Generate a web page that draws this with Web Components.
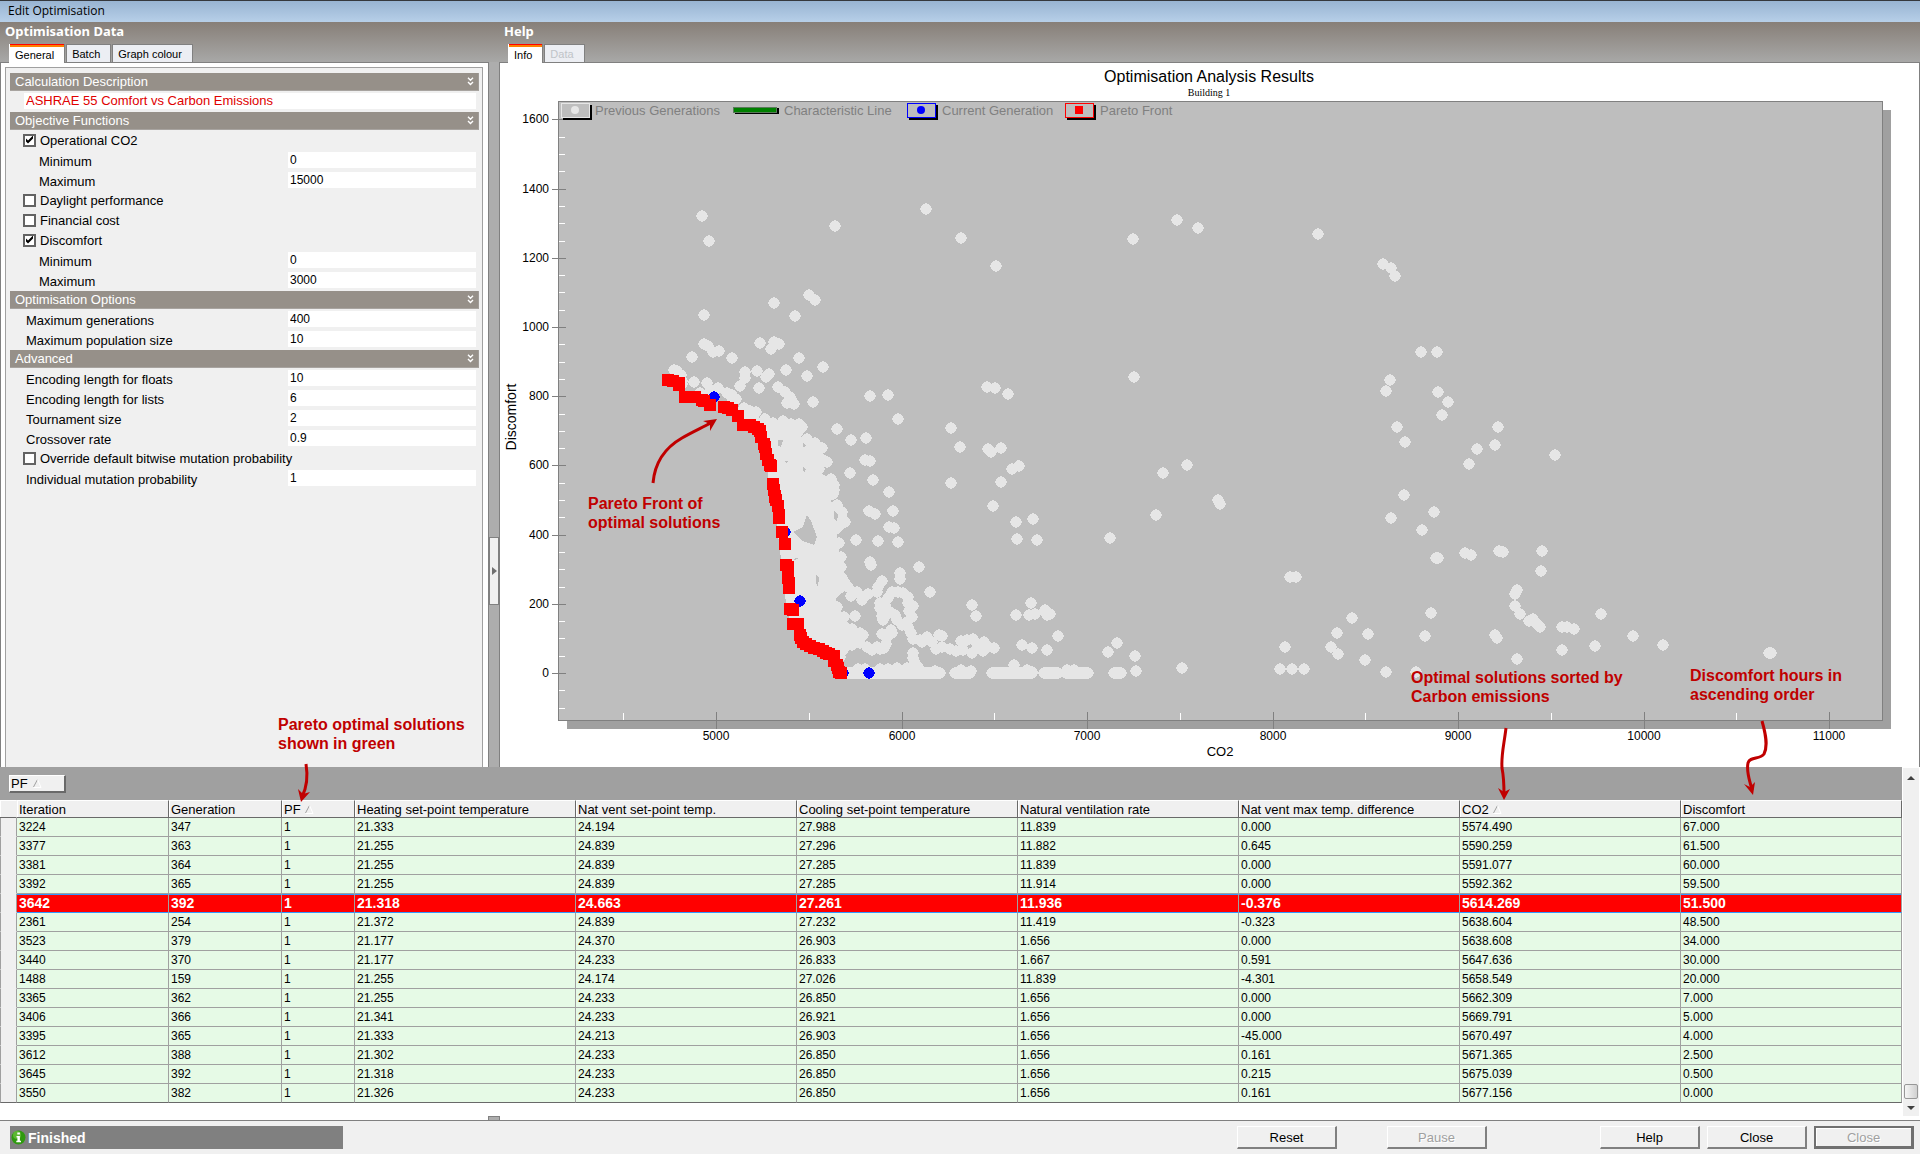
<!DOCTYPE html>
<html lang="en">
<head>
<meta charset="utf-8">
<title>Edit Optimisation</title>
<style>
html,body{margin:0;padding:0}
body{font-family:"Liberation Sans",Arial,sans-serif;font-size:13px;color:#000;background:#f0f0f0}
</style>
</head>
<body>
<optimisation-window></optimisation-window>

<script>
const define = (name, render, setup) => customElements.define(name, class extends HTMLElement {
  connectedCallback() {
    if (this.shadowRoot) return;
    this.attachShadow({ mode: "open" }).innerHTML = render(this);
    if (setup) setup(this, this.shadowRoot);
  }
});

define("title-bar", () => `
<style>
:host{display:flex;align-items:center;box-sizing:border-box;height:22px;padding:0 8px 2px;border-top:1px solid #35383d;
 background:linear-gradient(#98b4d2,#b7cfe8);font:12px "Open Sans","Noto Sans",sans-serif}
</style><slot></slot>`);

define("tab-strip", el => `
<style>
:host{display:block}
h2{margin:0;height:22px;padding:0 5px;font:bold 13px/18px "Noto Sans","Open Sans",sans-serif;color:#fff}
div{display:flex;gap:1px;padding-left:9px;height:18px}
button{margin:0;height:18px;padding:2px 10px 0 5px;border:1px solid #808080;border-bottom:0;background:#eceef3;
 font:11px/15px "Liberation Sans",sans-serif;color:#000;text-align:left;white-space:nowrap}
button.on{height:19px;padding-top:4px;border-top:0;border-left-color:#fff;
 background:linear-gradient(#f00 1px,#ff8000 1px,#ff8000 3px,#fff 3px);z-index:1}
button:disabled{color:#c0c4c8}
</style>
<h2>${el.getAttribute("heading")}</h2>
<div role="tablist">${el.getAttribute("tabs").split(",").map((t, i) =>
  `<button role="tab" class="${i ? "" : "on"}" ${t[0] === "-" ? "disabled" : ""}>${t.replace("-", "")}</button>`).join("")}</div>`);

define("option-section", el => `
<style>
:host{display:block}
h3{display:flex;align-items:center;justify-content:space-between;box-sizing:border-box;margin:1px 0 0;height:18px;padding:0 4px 0 5px;
 background:#969089;border-right:1px solid #a09c98;border-bottom:1px solid #a8a4a0;font:13px/16px "Liberation Sans",sans-serif;color:#fff}
</style>
<h3>${el.getAttribute("heading")}<svg width="7" height="9" viewBox="0 0 7 9" fill="none" stroke="#fff" stroke-width="1.4"><path d="M1 .8L3.5 3.3L6 .8M1 5L3.5 7.5L6 5"/></svg></h3>
<slot></slot>`);

define("option-field", el => `
<style>
:host{display:block;height:20px}
label{display:flex;height:20px;padding:0 3px 0 16px}
:host([sub]) label{padding-left:29px}
span{flex:1;padding-top:4px;line-height:15px;white-space:nowrap}
input{box-sizing:border-box;width:188px;height:16px;margin:2px 0 0;padding:0 2px;border:0;background:#fff;
 font:12px/16px "Liberation Sans",sans-serif;color:#000;border-radius:0}
:host([wide]) label{padding-left:14px}
:host([wide]) input{flex:1;font-size:13px;color:#e00000}
</style>
<label>${el.hasAttribute("wide") ? "" : `<span>${el.getAttribute("label")}</span>`}<input type="text" value="${el.getAttribute("value")}" ${el.hasAttribute("wide") ? 'aria-label="Description"' : ""}></label>`);

define("option-check", el => `
<style>
:host{display:block;height:20px}
label{display:flex;align-items:center;gap:4px;height:20px;padding-left:13px;white-space:nowrap}
input{appearance:none;box-sizing:border-box;width:13px;height:13px;margin:0;border:2px solid #636363;background:#fff}
input:checked::after{content:"";display:block;width:9px;height:9px;background:#000;
 clip-path:polygon(1px 3px,3px 5px,8px 0,8px 3px,3px 8px,1px 6px)}
</style>
<label><input type="checkbox" ${el.hasAttribute("checked") ? "checked" : ""}>${el.getAttribute("label")}</label>`);

define("options-pane", () => `
<style>
:host{display:flex;flex-direction:column;width:489px;flex:none}
.page{flex:1;display:flex;box-sizing:border-box;padding:4px 5px 0 4px;border:1px solid #808080;border-bottom:0;background:#fff}
.box{flex:1;box-sizing:border-box;padding:4px 3px 0 4px;border:1px solid #a0a0a0;border-bottom:0;background:#f0f0f0}
</style>
<tab-strip heading="Optimisation Data" tabs="General,Batch,Graph colour"></tab-strip>
<div class="page"><div class="box">
<option-section heading="Calculation Description">
 <option-field wide value="ASHRAE 55 Comfort vs Carbon Emissions"></option-field>
</option-section>
<option-section heading="Objective Functions">
 <option-check label="Operational CO2" checked></option-check>
 <option-field sub label="Minimum" value="0"></option-field>
 <option-field sub label="Maximum" value="15000"></option-field>
 <option-check label="Daylight performance"></option-check>
 <option-check label="Financial cost"></option-check>
 <option-check label="Discomfort" checked></option-check>
 <option-field sub label="Minimum" value="0"></option-field>
 <option-field sub label="Maximum" value="3000"></option-field>
</option-section>
<option-section heading="Optimisation Options">
 <option-field label="Maximum generations" value="400"></option-field>
 <option-field label="Maximum population size" value="10"></option-field>
</option-section>
<option-section heading="Advanced">
 <option-field label="Encoding length for floats" value="10"></option-field>
 <option-field label="Encoding length for lists" value="6"></option-field>
 <option-field label="Tournament size" value="2"></option-field>
 <option-field label="Crossover rate" value="0.9"></option-field>
 <option-check label="Override default bitwise mutation probability"></option-check>
 <option-field label="Individual mutation probability" value="1"></option-field>
</option-section>
</div></div>`);

/* Sample positions, grouped by chart region: origin, units per pixel, then x,y pairs. */
const SAMPLES = [
 [540,250,3,"1368,48 807,134 825,150 702,159 765,198 492,195 659,279 702,275 717,282 693,297 492,281 503,287 519,306 537,303 576,324 456,321 777,324 849,351 738,361 801,378 651,363 686,371 679,381 615,366 615,383 600,408 657,414 714,412 735,426 749,442 741,460 763,462 757,452 819,456 402,360 412,362 424,374 426,392 427,403 462,396 501,398 535,414 480,428 510,423 525,420 560,428 575,434 588,446 990,438 1044,435 1074,507 891,537 933,570 978,564 975,630 990,633 930,669 999,690 1047,726 1233,534 1260,591 1345,597 1353,606 1383,594 1341,411 1365,414 1404,432 1416,657 1437,648 1383,696 1233,699 612,474 630,482 648,486 675,508 700,518 729,512 752,522 777,522 785,531 775,545 800,568 825,580 845,594 832,606 861,636 850,630 838,658 826,672 873,686 855,700 882,706 882,720 878,733 848,705 832,735 740,582 712,570 705,540 720,545"],
 [540,490,3,"1047,5 987,62 1005,72 1059,63 1047,112 1062,113 948,150 1014,153 1074,156 990,215 993,225 1137,231 1170,306 1296,345 1308,378 1358,48 880,10 890,45 905,65 903,78 915,97 897,108 888,116 862,20 775,97 760,110 840,152 860,160 897,160 860,175 903,200 885,215 903,230 895,250 905,265 915,280 925,290 950,305 932,318 965,330 985,312 1010,305 1025,273 1015,290 1080,248 1080,268 1055,305 1075,305 1088,308 1103,322 1103,340 1120,348 1108,362 1115,380 1100,395 1105,412 1085,405 1112,430 1120,447 1145,455 1160,441 1140,450 1175,455 1196,435 1206,438 1187,477 1205,470 1230,478 1247,482 1262,453 1280,450 1300,448 1332,455 1310,462 1270,480 1296,488 1328,484 1345,470 1362,474 1020,355 1020,340 1035,345 1045,325 1030,390 1025,378 1050,365 1065,375 1070,390 1040,372 890,350 888,372 912,380 945,378 900,395 915,410 935,418 960,430 970,435 940,445 960,460 980,470 995,480 1020,478 1032,475 1010,470 1038,462 1025,432 1040,440 1055,430 1052,420 935,465 910,480 900,500 890,490 1120,490 1118,503 1125,518 1133,530 1100,533 1045,536 1070,535 1020,538 955,536 975,538 1185,543 1262,540 1292,543 1421,524 1462,540 1475,546"],
 [1000,150,3,"531,210 594,234 399,267 954,252 1149,342 1173,354 1185,378 1263,606 1311,606 1170,690 1158,723 1314,726 1344,756 1326,795 1191,831 1215,876 402,681 -12,348"],
 [1000,460,3,"489,39 561,15 48,186 99,177 51,237 111,240 330,234 468,165 654,120 659,132 93,429 48,465 88,465 105,462 135,450 141,465 150,462 66,555 96,564 141,570 174,528 351,549 324,576 405,588 408,633 546,624 840,627 876,627 912,627 855,561 993,561 1014,582 1011,519 1104,522 1056,474 1095,600 1158,636 1248,636 1293,459 1275,528 1212,105 1302,156 1173,174 1266,210 1308,294 1314,294 870,351 888,351 42,614 80,630 200,630 222,630"],
 [0,0,1,"702,216 709,241 835,226 926,209 961,238 1498,427 1495,445 1477,449 1469,464 1555,455 1465,553 1471,555 1499,551 1503,552 1542,551 1541,571 1517,590 1515,594 1515,606 1520,614 1529,621 1533,619 1537,624 1540,627 1562,627 1567,627 1574,629 1601,614 1495,635 1497,638 1517,659 1562,650 1595,646 1633,636 1663,645 1769,653 1771,653"]
];
const FRONT = [
 [540,250,"384,390 400,393 417,405 417,400 435,441 453,440 465,442 485,449 491,453 510,464 552,471 565,475 576,479 594,497 609,525 630,526 641,530 655,537 660,543 663,562 672,581 675,592 678,612 685,630 689,645 693,648 699,702 702,720 706,738"],
 [540,490,"702,0 705,20 709,30 713,48 717,75 717,84 727,127 735,161 738,225 743,232 745,265 747,280 747,293 750,358 759,360 759,402 773,402 780,435 782,443 790,455 797,463 810,468 822,473 838,478 850,482 857,489 868,492 882,498 882,512 890,525 895,533 897,545 903,549"]
];
const CURRENT = "714,397 785,532 800,601 869,673 843,673";

const pairs = (s, ox, oy, k, f) => s.split(" ").map(p => {
  const [x, y] = p.split(",").map(Number);
  return f(Math.round(ox + x / k), Math.round(oy + y / k));
}).join("");

define("scatter-chart", () => {
  const dot = (x, y) => `<circle cx="${x}" cy="${y}" r="5.7"/>`;
  let axes = "", labels = "";
  for (let v = -100; v <= 1600; v += 50) {
    const y = Math.round(673 - v * 0.346);
    axes += v % 200 ? `<rect x="559" y="${y}" width="6" height="1" fill="#fff"/>` : `<rect x="552" y="${y}" width="14" height="1" fill="#808080"/>`;
    if (v >= 0 && v % 200 === 0) labels += `<text x="549" y="${y + 4}" text-anchor="end">${v}</text>`;
  }
  for (let v = 4500; v <= 11000; v += 500) {
    const x = Math.round(716 + (v - 5000) * 0.1855);
    axes += v % 1000 ? `<rect x="${x}" y="713" width="1" height="7" fill="#fff"/>` : `<rect x="${x}" y="712" width="1" height="17" fill="#808080"/>`;
    if (v % 1000 === 0) labels += `<text x="${x}" y="740" text-anchor="middle">${v}</text>`;
  }
  const key = (x, c, mark) => `<path d="M${x + 2} 119H${x + 30}V105" fill="none" stroke="#000" stroke-width="2"/><rect x="${x + .5}" y="103.5" width="28" height="14" fill="#bebebe" stroke="${c}"/>${mark}`;
  return `
<style>
:host{display:block;flex:1;min-height:0;contain:size}
svg{display:block;width:100%;height:100%}
text{font-family:"Liberation Sans",sans-serif;font-size:12px;fill:#000}
.key text{font-size:13px;fill:#808080}
</style>
<svg viewBox="500 63 1419 704" preserveAspectRatio="xMidYMin meet" role="img" aria-label="Optimisation Analysis Results">
<text x="1209" y="82" text-anchor="middle" style="font-size:16px">Optimisation Analysis Results</text>
<text x="1209" y="96" text-anchor="middle" style="font:10px 'Liberation Serif',serif">Building 1</text>
<rect x="567" y="110" width="1324" height="619" fill="#a0a0a0"/>
<rect x="558.5" y="101.5" width="1324" height="619" fill="#bebebe" stroke="#808080"/>
${axes}${labels}
<g class="key">
${key(561, "#e6e6e6", '<circle cx="575" cy="110" r="4" fill="#e6e6e6"/>')}
<text x="595" y="115">Previous Generations</text>
<path d="M735 113H778V108" fill="none" stroke="#000" stroke-width="2"/><rect x="733.5" y="107.5" width="43" height="5" fill="#008000" stroke="#5a7a5a"/>
<text x="784" y="115">Characteristic Line</text>
${key(907, "#0000ff", '<circle cx="921" cy="110" r="4" fill="#00f"/>')}
<text x="942" y="115">Current Generation</text>
${key(1065, "#ff0000", '<rect x="1075" y="106" width="8" height="8" fill="#f00"/>')}
<text x="1100" y="115">Pareto Front</text>
</g>
<g fill="#e6e6e6" shape-rendering="crispEdges">
<path d="M722 393L740 408L760 418L773 424L799 424L801 432L797 434L807 440L819 448L816 452L825 462L818 470L830 480L834 492L826 498L837 506L843 520L836 530L838 544L840 560L841 578L848 588L836 598L836 608L845 617L841 623L858 637L858 644L845 650L836 660L841 673L833 656L820 649L807 644L800 635L792 624L786 609L785 588L782 565L779 545L778 532L774 506L769 484L767 466L763 447L756 430L738 416Z"/>
${SAMPLES.map(([x, y, k, s]) => pairs(s, x, y, k, dot)).join("")}
<path d="M846 673H940M955 673H970M992 673H1032M1044 673H1058M1066 673H1088M1114 673H1121" stroke="#e6e6e6" stroke-width="11.4" stroke-linecap="round"/>
</g>
<g fill="#bebebe" shape-rendering="crispEdges">
<path d="M793 532L803 527L807 515L811 521L817 537L814 545L803 541Z"/>
<path d="M834 511L838 514L837 522L834 519ZM778 440L783 440L781 447L778 446ZM803 443L807 446L803 447ZM796 558L799 559L793 560ZM816 575L819 577L818 587L816 583ZM803 467L806 469L805 472L803 471ZM785 461L788 461L786 463Z"/>
</g>
<g fill="#00f" shape-rendering="crispEdges">${pairs(CURRENT, 0, 0, 1, dot)}</g>
<g fill="#f00" shape-rendering="crispEdges">${FRONT.map(([x, y, s]) => pairs(s, x, y, 3, (a, b) => `<rect x="${a - 6}" y="${b - 6}" width="12" height="12"/>`)).join("")}</g>
<text transform="translate(516 417) rotate(-90)" text-anchor="middle" style="font-size:14px">Discomfort</text>
<text x="1220" y="756" text-anchor="middle" style="font-size:13px">CO2</text>
</svg>`;
});

define("help-pane", () => `
<style>
:host{display:flex;flex-direction:column;flex:1;min-width:0}
.page{flex:1;display:flex;flex-direction:column;box-sizing:border-box;min-height:0;border:1px solid #808080;border-bottom:0;background:#fff}
</style>
<tab-strip heading="Help" tabs="Info,-Data"></tab-strip>
<div class="page"><scatter-chart></scatter-chart></div>`);

define("pane-splitter", () => `
<style>
:host{display:flex;flex-direction:column;justify-content:center;box-sizing:border-box;width:10px;flex:none;padding-top:352px;background:linear-gradient(transparent 40px,#adadad 40px)}
button{width:10px;height:68px;margin:0;padding:0;border:1px solid #808080;background:#f0f0f0;display:flex;align-items:center;justify-content:center}
</style>
<button aria-label="Collapse panel"><svg width="5" height="8"><path d="M0 0L5 4L0 8Z" fill="#707070"/></svg></button>`);

const SORT = `<svg width="9" height="9" viewBox="0 0 9 9" fill="none"><path d="M.5 8L4.5 .5" stroke="#a0a0a0"/><path d="M4.5 .5L8 8.5H.5" stroke="#fff"/></svg>`;
const COLUMNS = ["Iteration","Generation","PF","Heating set-point temperature","Nat vent set-point temp.","Cooling set-point temperature","Natural ventilation rate","Nat vent max temp. difference","CO2","Discomfort"];
const ROWS = `3224 347 1 21.333 24.194 27.988 11.839 0.000 5574.490 67.000
3377 363 1 21.255 24.839 27.296 11.882 0.645 5590.259 61.500
3381 364 1 21.255 24.839 27.285 11.839 0.000 5591.077 60.000
3392 365 1 21.255 24.839 27.285 11.914 0.000 5592.362 59.500
3642 392 1 21.318 24.663 27.261 11.936 -0.376 5614.269 51.500
2361 254 1 21.372 24.839 27.232 11.419 -0.323 5638.604 48.500
3523 379 1 21.177 24.370 26.903 1.656 0.000 5638.608 34.000
3440 370 1 21.177 24.233 26.833 1.667 0.591 5647.636 30.000
1488 159 1 21.255 24.174 27.026 11.839 -4.301 5658.549 20.000
3365 362 1 21.255 24.233 26.850 1.656 0.000 5662.309 7.000
3406 366 1 21.341 24.233 26.921 1.656 0.000 5669.791 5.000
3395 365 1 21.333 24.213 26.903 1.656 -45.000 5670.497 4.000
3612 388 1 21.302 24.233 26.850 1.656 0.161 5671.365 2.500
3645 392 1 21.318 24.233 26.850 1.656 0.215 5675.039 0.500
3550 382 1 21.326 24.233 26.850 1.656 0.161 5677.156 0.000`.split("\n").map(r => r.split(" "));

define("results-grid", () => `
<style>
:host{display:flex;position:relative;background:#fff;border-bottom:1px solid #808080}
.main{flex:1;min-width:0;padding-bottom:17px}
.group{display:flex;align-items:center;box-sizing:border-box;height:33px;padding:0 9px;background:#a0a0a0}
.group button{display:flex;align-items:center;gap:5px;width:57px;height:18px;padding:0 1px;border:1px solid #fff;border-right:2px solid #696969;border-bottom:2px solid #696969;background:#f0f0f0;font:13px "Liberation Sans",sans-serif;color:#000}
table{width:100%;table-layout:fixed;border-collapse:separate;border-spacing:0}
th,td{box-sizing:border-box;padding:0 0 0 2px;text-align:left;vertical-align:middle;white-space:nowrap;overflow:hidden}
th{height:18px;background:#f0f0f0;border-top:1px solid #fff;border-right:1px solid #696969;border-bottom:1px solid #696969;font-weight:400;font-size:13px;line-height:15px;box-shadow:inset 1px 0 #fff}
th:first-child{border-right-color:#f0f0f0}
td{height:19px;border-right:1px solid #a0a0a0;border-bottom:1px solid #a0a0a0;background:#e6fae6;font-size:12px;line-height:16px}
td:first-child{background:#f0f0f0;border-bottom-color:#f0f0f0;border-left:1px solid #a0a0a0}
tr:last-child td{border-bottom-color:#696969}
tr.sel td:not(:first-child){background:#f00;color:#fff;font-weight:700;font-size:14px;border-bottom-color:#3399ff;box-shadow:inset 0 1px #3399ff}
th svg{margin-left:4px}
.nub{position:absolute;left:488px;bottom:0;box-sizing:border-box;width:12px;height:4px;border:1px solid #808080;border-bottom:0;background:#adadad}
.bar{display:flex;flex-direction:column;align-items:center;width:16px;margin:1px 1px 4px;background:#f0f0f0}
.bar i{width:0;border:4px solid transparent}
.bar .up{border-bottom-color:#404040;border-top:0;margin-top:8px}
.bar .down{border-top-color:#404040;border-bottom:0;margin:7px 0 6px}
.bar b{box-sizing:border-box;width:14px;height:15px;margin-top:auto;border:1px solid #979797;border-radius:2px;background:linear-gradient(90deg,#f5f5f5,#d0d0d0)}
</style>
<div class="main">
<div class="group"><button>PF ${SORT}</button></div>
<table><colgroup><col style="width:17px"><col style="width:152px"><col style="width:113px"><col style="width:73px"><col span="7"></colgroup>
<thead><tr><th></th>${COLUMNS.map(c => `<th>${c}${c === "PF" || c === "CO2" ? SORT : ""}</th>`).join("")}</tr></thead>
<tbody>${ROWS.map(r => `<tr class="${r[0] === "3642" ? "sel" : ""}"><td></td>${r.map(c => `<td>${c}</td>`).join("")}</tr>`).join("")}</tbody></table>
</div>
<div class="bar"><i class="up"></i><b></b><i class="down"></i></div>
<div class="nub"></div>`);

define("status-bar", () => `
<style>
:host{display:flex;align-items:center;box-sizing:border-box;height:33px;padding:0 6px 0 10px;background:#f0f0f0}
.state{display:flex;align-items:center;gap:2px;box-sizing:border-box;width:333px;height:23px;padding-left:1px;background:#808080;color:#fff;font-weight:700;font-size:14px}
.buttons{display:flex;margin-left:auto;gap:7px}
button{box-sizing:border-box;width:100px;height:23px;padding:0;border:1px solid #fff;border-right:2px solid #808080;border-bottom:2px solid #808080;background:#f0f0f0;font:13px "Liberation Sans",sans-serif;color:#000}
button:disabled{color:#a0a0a0;text-shadow:1px 1px #fff}
.reset{margin-right:43px}
.pause{margin-right:106px}
.last{border:2px solid #707070;border-right-width:3px;border-bottom-width:3px;box-shadow:inset 1px 1px #fff}
</style>
<div class="state"><svg width="15" height="15" viewBox="0 0 15 15"><circle cx="7.5" cy="7.5" r="7" fill="#2f9a10"/><circle cx="6" cy="5" r="4" fill="#7ccc4a" opacity=".6"/><path d="M6.3 2.5h2.6v2H6.3zM5.5 6h3.4v4.8H10v1.5H5.3v-1.5h1.1V7.4h-.9z" fill="#fff"/></svg>Finished</div>
<div class="buttons"><button class="reset">Reset</button><button class="pause" disabled>Pause</button><button>Help</button><button>Close</button><button class="last" disabled>Close</button></div>`);

define("annotation-layer", () => `
<style>
:host{position:absolute;inset:0;pointer-events:none}
svg{display:block;width:100%;height:100%}
text{font:bold 16px "Liberation Sans",sans-serif;fill:#c00000}
</style>
<svg viewBox="0 0 1920 1154" preserveAspectRatio="xMidYMin meet">
<text x="588" y="509">Pareto Front of</text><text x="588" y="528">optimal solutions</text>
<text x="278" y="730">Pareto optimal solutions</text><text x="278" y="749">shown in green</text>
<text x="1411" y="683">Optimal solutions sorted by</text><text x="1411" y="702">Carbon emissions</text>
<text x="1690" y="681">Discomfort hours in</text><text x="1690" y="700">ascending order</text>
<g fill="none" stroke="#c00000" stroke-width="3">
<path d="M653 483C655 460 668 446 682 438S704 427 712 422"/>
<path d="M306 764C308 776 307 787 302 797"/>
<path d="M1506 728C1504 745 1501 755 1502 768C1504 778 1504 784 1504 795"/>
<path d="M1762 721C1766 735 1768 746 1764 754C1760 760 1750 756 1748 763C1746 772 1750 781 1752 790"/>
</g>
<g fill="#c00000">
<path d="M717 419L703 421L710 424L710 431Z"/>
<path d="M301 802L298 789L303 794L310 792Z"/>
<path d="M1504 800L1498 788L1504 792L1510 789Z"/>
<path d="M1753 795L1744 784L1750 787L1755 782Z"/>
</g></svg>`);

define("optimisation-window", () => `
<style>
:host{position:relative;display:flex;flex-direction:column;min-height:100vh;background:#fff}
main{flex:1;display:flex;min-height:0;background:linear-gradient(#877f78,#a8a8a7 40px)}
</style>
<title-bar>Edit Optimisation</title-bar>
<main><options-pane></options-pane><pane-splitter></pane-splitter><help-pane></help-pane></main>
<results-grid></results-grid>
<status-bar></status-bar>
<annotation-layer></annotation-layer>`);
</script>
</body>
</html>
